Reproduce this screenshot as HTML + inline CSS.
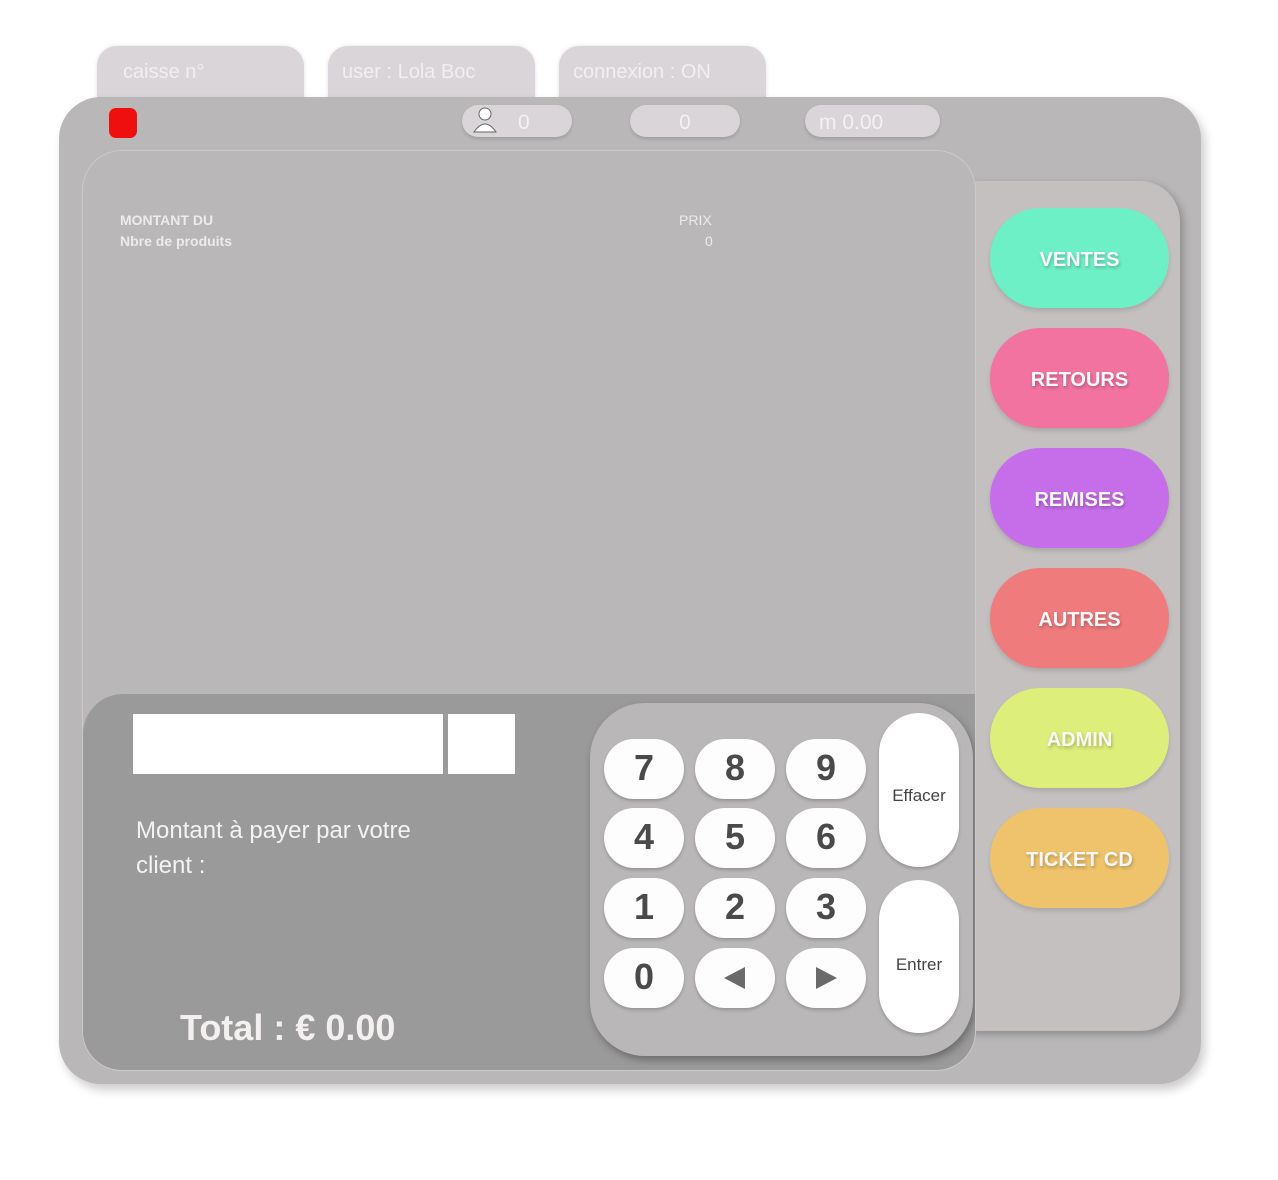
<!DOCTYPE html>
<html><head><meta charset="utf-8"><style>
*{margin:0;padding:0;box-sizing:border-box}
body{width:1278px;height:1180px;background:#fff;font-family:"Liberation Sans",sans-serif;position:relative;overflow:hidden}
.a{position:absolute}
.tab{top:46px;height:60px;width:207px;background:#d9d5d8;border-radius:20px 20px 0 0;color:#f1eff0;font-size:20px;padding:15px 0 0 26px;box-shadow:0 0 4px rgba(0,0,0,.12)}
.main{left:59px;top:97px;width:1142px;height:987px;background:#b9b7b8;border-radius:42px;box-shadow:4px 6px 10px rgba(0,0,0,.2)}
.pill{top:105px;height:32px;background:#d9d5d8;border-radius:16px;color:#f3f1f2;font-size:21px;line-height:36px;box-shadow:0 2px 3px rgba(0,0,0,.15)}
.right{left:940px;top:181px;width:240px;height:850px;background:#c3c0bf;border-radius:40px;box-shadow:3px 3px 8px rgba(0,0,0,.25)}
.inner{left:82px;top:150px;width:894px;height:921px;background:#b9b7b8;border:1px solid #cdc8c9;border-radius:40px;overflow:hidden}
.btn{left:990px;width:179px;height:100px;border-radius:50px;color:#fbf7f7;font-weight:bold;font-size:20px;text-align:center;line-height:104px;text-shadow:1px 2px 3px rgba(0,0,0,.25);box-shadow:0 3px 4px rgba(0,0,0,.12)}
.k{width:80px;height:60px;background:#fdfdfd;border-radius:30px;color:#4a4a4a;font-weight:bold;font-size:36px;text-align:center;line-height:58px;box-shadow:0 2px 3px rgba(0,0,0,.2)}
.big{left:879px;width:80px;background:#fff;border-radius:40px;color:#444;font-size:17px;text-align:center;box-shadow:0 2px 3px rgba(0,0,0,.2)}
.sm{color:#ececec;font-size:14px}
</style></head><body>
<div class="a tab" style="left:97px">caisse n°</div>
<div class="a tab" style="left:328px;padding-left:14px">user : Lola Boc</div>
<div class="a tab" style="left:559px;padding-left:14px">connexion : ON</div>
<div class="a main"></div>
<div class="a" style="left:109px;top:108px;width:28px;height:30px;background:#ef0f0f;border-radius:7px"></div>
<div class="a pill" style="left:462px;width:110px;padding-left:56px">0</div>
<svg class="a" style="left:472px;top:106px" width="26" height="28" viewBox="0 0 26 28"><circle cx="13" cy="8" r="6" fill="#fff" stroke="#666" stroke-width="1"/><path d="M2 26 Q13 10 24 26 Z" fill="#fff" stroke="#666" stroke-width="1"/></svg>
<div class="a pill" style="left:630px;width:110px;text-align:center">0</div>
<div class="a pill" style="left:805px;width:135px;padding-left:14px">m 0.00</div>
<div class="a right"></div>
<div class="a inner">
  <div class="a sm" style="left:37px;top:61px;font-weight:bold">MONTANT DU</div>
  <div class="a sm" style="left:37px;top:82px;font-weight:bold">Nbre de produits</div>
  <div class="a sm" style="left:596px;top:61px">PRIX</div>
  <div class="a sm" style="left:622px;top:82px">0</div>
  <div class="a" style="left:0;top:543px;width:894px;height:380px;background:#9b9a9a;border-radius:40px 0 0 0"></div>
  <div class="a" style="left:50px;top:563px;width:310px;height:60px;background:#fff"></div>
  <div class="a" style="left:365px;top:563px;width:67px;height:60px;background:#fff"></div>
  <div class="a" style="left:53px;top:662px;color:#f4f2f2;font-size:24px;line-height:35px">Montant à payer par votre<br>client :</div>
  <div class="a" style="left:97px;top:856px;color:#f4f0f0;font-size:36px;font-weight:bold">Total : € 0.00</div>
  <div class="a" style="left:507px;top:552px;width:383px;height:353px;background:#b9b7b8;border-radius:55px;box-shadow:2px 4px 8px rgba(0,0,0,.3)"></div>
</div>
<div class="a k" style="left:604px;top:739px">7</div>
<div class="a k" style="left:695px;top:739px">8</div>
<div class="a k" style="left:786px;top:739px">9</div>
<div class="a k" style="left:604px;top:808px">4</div>
<div class="a k" style="left:695px;top:808px">5</div>
<div class="a k" style="left:786px;top:808px">6</div>
<div class="a k" style="left:604px;top:878px">1</div>
<div class="a k" style="left:695px;top:878px">2</div>
<div class="a k" style="left:786px;top:878px">3</div>
<div class="a k" style="left:604px;top:948px">0</div>
<div class="a k" style="left:695px;top:948px"><svg width="26" height="26" viewBox="0 0 26 26" style="margin-top:17px"><path d="M2 13 L23 2 L23 24 Z" fill="#6a6a6a"/></svg></div>
<div class="a k" style="left:786px;top:948px"><svg width="26" height="26" viewBox="0 0 26 26" style="margin-top:17px"><path d="M24 13 L3 2 L3 24 Z" fill="#6a6a6a"/></svg></div>
<div class="a big" style="top:713px;height:154px;line-height:166px">Effacer</div>
<div class="a big" style="top:880px;height:153px;line-height:170px">Entrer</div>
<div class="a btn" style="top:208px;background:#6ef0c7">VENTES</div>
<div class="a btn" style="top:328px;background:#f273a0">RETOURS</div>
<div class="a btn" style="top:448px;background:#c66eea">REMISES</div>
<div class="a btn" style="top:568px;background:#ef7b7d">AUTRES</div>
<div class="a btn" style="top:688px;background:#ddee7b">ADMIN</div>
<div class="a btn" style="top:808px;background:#eec36b">TICKET CD</div>
</body></html>
